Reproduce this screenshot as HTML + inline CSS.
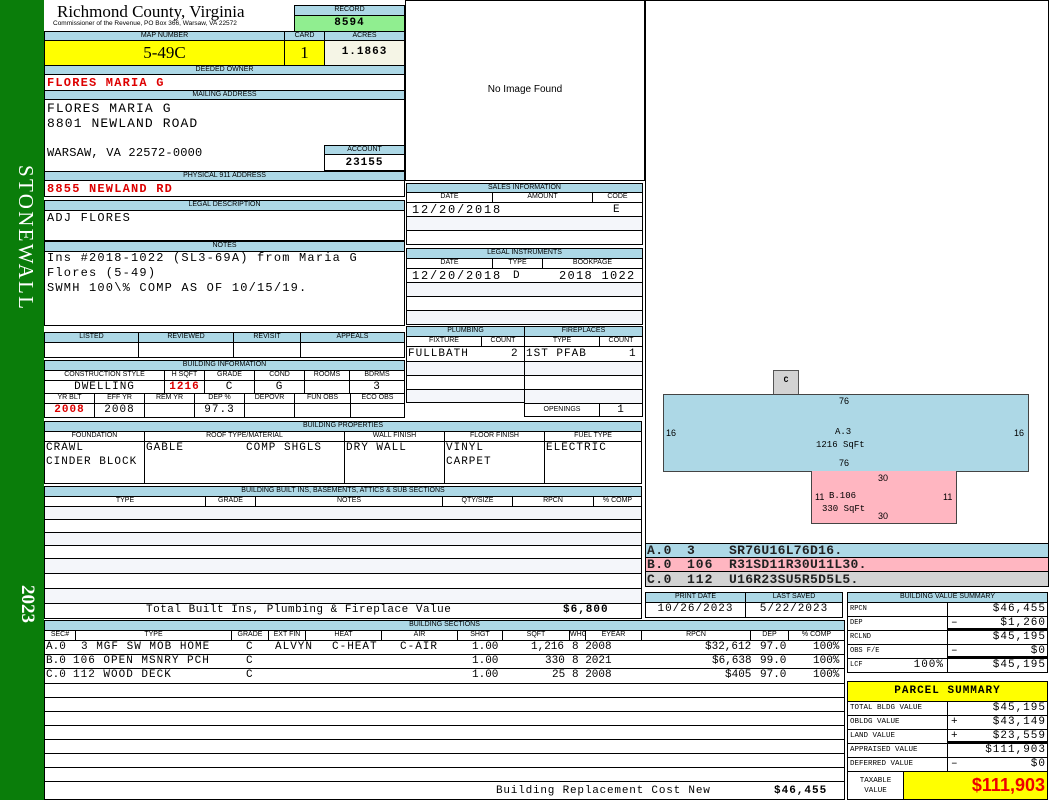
<!DOCTYPE html>
<html><head><meta charset="utf-8"><style>
*{margin:0;padding:0;box-sizing:border-box}
body{width:1050px;height:800px;position:relative;background:#fff;overflow:hidden;font-family:"Liberation Sans",sans-serif}
div{position:absolute}
.h{background:#add8e6;border:1px solid #000;font-size:7px;text-align:center;line-height:8px;color:#000;white-space:nowrap;overflow:hidden}
.l{background:#fff;border:1px solid #000;font-size:7px;text-align:center;line-height:8px;white-space:nowrap;overflow:hidden}
.c{border:1px solid #000;background:#fff}
.g{border:1px solid #000;background:#f4f6fa}
.m{font-family:"Liberation Mono",monospace;font-size:11px;white-space:nowrap;line-height:13px;letter-spacing:1px}
.b{font-size:12px;letter-spacing:1.2px}
.n{letter-spacing:0}
.r{color:#d00;font-weight:bold}
.rt{text-align:right}
.ct{text-align:center}
</style></head><body>
<!-- sidebar -->
<div style="left:0;top:0;width:44px;height:800px;background:#0a7d0a"></div>
<div style="left:6px;top:165px;width:32px;height:160px;color:#fff;font-family:'Liberation Serif',serif;font-size:21px;writing-mode:vertical-rl;letter-spacing:2.3px">STONEWALL</div>
<div style="left:6px;top:585px;width:32px;height:50px;color:#fff;font-family:'Liberation Serif',serif;font-size:19px;font-weight:bold;writing-mode:vertical-rl">2023</div>

<!-- title -->
<div style="left:57px;top:2px;font-family:'Liberation Serif',serif;font-size:17px;line-height:20px">Richmond County, Virginia</div>
<div style="left:53px;top:20px;font-size:6.5px;line-height:7px;white-space:nowrap">Commissioner of the Revenue, PO Box 366, Warsaw, VA 22572</div>
<div class="h" style="left:294px;top:5px;width:111px;height:11px">RECORD</div>
<div class="c m" style="left:294px;top:15px;width:111px;height:17px;background:#90ee90;text-align:center;font-weight:bold;line-height:14px">8594</div>

<div class="h" style="left:44px;top:31px;width:241px;height:10px">MAP NUMBER</div>
<div class="h" style="left:284px;top:31px;width:41px;height:10px">CARD</div>
<div class="h" style="left:324px;top:31px;width:81px;height:10px">ACRES</div>
<div class="c" style="left:44px;top:40px;width:241px;height:26px;background:#ffff00;font-family:'Liberation Serif',serif;font-size:17px;text-align:center;line-height:23px">5-49C</div>
<div class="c" style="left:284px;top:40px;width:41px;height:26px;background:#ffff00;font-family:'Liberation Serif',serif;font-size:17px;text-align:center;line-height:23px">1</div>
<div class="c m" style="left:324px;top:40px;width:81px;height:26px;background:#f5f5e6;text-align:center;font-weight:bold;line-height:23px">1.1863</div>

<div class="h" style="left:44px;top:65px;width:361px;height:10px">DEEDED OWNER</div>
<div class="c m r b" style="left:44px;top:74px;width:361px;height:17px;padding-left:2px;line-height:16px">FLORES MARIA G</div>
<div class="h" style="left:44px;top:90px;width:361px;height:10px">MAILING ADDRESS</div>
<div class="c" style="left:44px;top:99px;width:361px;height:73px"></div>
<div class="m" style="left:47px;top:102px;font-size:13px;letter-spacing:1.1px">FLORES MARIA G</div>
<div class="m" style="left:47px;top:117px;font-size:13px;letter-spacing:1.1px">8801 NEWLAND ROAD</div>
<div class="m" style="left:47px;top:147px;font-size:12px;letter-spacing:0.2px">WARSAW, VA 22572-0000</div>
<div class="h" style="left:324px;top:145px;width:81px;height:10px">ACCOUNT</div>
<div class="c m" style="left:324px;top:154px;width:81px;height:17px;text-align:center;font-weight:bold;line-height:16px">23155</div>
<div class="h" style="left:44px;top:171px;width:361px;height:10px">PHYSICAL 911 ADDRESS</div>
<div class="c m r b" style="left:44px;top:180px;width:361px;height:17px;padding-left:2px;line-height:16px">8855 NEWLAND RD</div>

<div class="h" style="left:44px;top:200px;width:361px;height:11px">LEGAL DESCRIPTION</div>
<div class="c" style="left:44px;top:210px;width:361px;height:31px"></div>
<div class="m b" style="left:47px;top:212px">ADJ FLORES</div>
<div class="h" style="left:44px;top:241px;width:361px;height:11px">NOTES</div>
<div class="c" style="left:44px;top:251px;width:361px;height:75px"></div>
<div class="m b" style="left:47px;top:252px">Ins #2018-1022 (SL3-69A) from Maria G</div>
<div class="m b" style="left:47px;top:267px">Flores (5-49)</div>
<div class="m b" style="left:47px;top:282px">SWMH 100\% COMP AS OF 10/15/19.</div>

<!-- listed -->
<div class="h" style="left:44px;top:332px;width:95px;height:11px">LISTED</div>
<div class="h" style="left:138px;top:332px;width:96px;height:11px">REVIEWED</div>
<div class="h" style="left:233px;top:332px;width:68px;height:11px">REVISIT</div>
<div class="h" style="left:300px;top:332px;width:105px;height:11px">APPEALS</div>
<div class="c" style="left:44px;top:342px;width:95px;height:16px"></div>
<div class="c" style="left:138px;top:342px;width:96px;height:16px"></div>
<div class="c" style="left:233px;top:342px;width:68px;height:16px"></div>
<div class="c" style="left:300px;top:342px;width:105px;height:16px"></div>

<!-- building info -->
<div class="h" style="left:44px;top:360px;width:361px;height:11px">BUILDING INFORMATION</div>
<div class="l" style="left:44px;top:370px;width:121px;height:11px">CONSTRUCTION STYLE</div>
<div class="l" style="left:164px;top:370px;width:41px;height:11px">H SQFT</div>
<div class="l" style="left:204px;top:370px;width:51px;height:11px">GRADE</div>
<div class="l" style="left:254px;top:370px;width:51px;height:11px">COND</div>
<div class="l" style="left:304px;top:370px;width:46px;height:11px">ROOMS</div>
<div class="l" style="left:349px;top:370px;width:56px;height:11px">BDRMS</div>
<div class="c m ct" style="left:44px;top:380px;width:121px;height:14px">DWELLING</div>
<div class="c m ct r" style="left:164px;top:380px;width:41px;height:14px">1216</div>
<div class="c m ct" style="left:204px;top:380px;width:51px;height:14px">C</div>
<div class="c m ct" style="left:254px;top:380px;width:51px;height:14px">G</div>
<div class="c m ct" style="left:304px;top:380px;width:46px;height:14px"></div>
<div class="c m ct" style="left:349px;top:380px;width:56px;height:14px">3</div>
<div class="l" style="left:44px;top:393px;width:51px;height:11px">YR BLT</div>
<div class="l" style="left:94px;top:393px;width:51px;height:11px">EFF YR</div>
<div class="l" style="left:144px;top:393px;width:51px;height:11px">REM YR</div>
<div class="l" style="left:194px;top:393px;width:51px;height:11px">DEP %</div>
<div class="l" style="left:244px;top:393px;width:51px;height:11px">DEPOVR</div>
<div class="l" style="left:294px;top:393px;width:57px;height:11px">FUN OBS</div>
<div class="l" style="left:350px;top:393px;width:55px;height:11px">ECO OBS</div>
<div class="c m ct r" style="left:44px;top:403px;width:51px;height:15px">2008</div>
<div class="c m ct" style="left:94px;top:403px;width:51px;height:15px">2008</div>
<div class="c m ct" style="left:144px;top:403px;width:51px;height:15px"></div>
<div class="c m ct" style="left:194px;top:403px;width:51px;height:15px">97.3</div>
<div class="c" style="left:244px;top:403px;width:51px;height:15px"></div>
<div class="c" style="left:294px;top:403px;width:57px;height:15px"></div>
<div class="c" style="left:350px;top:403px;width:55px;height:15px"></div>

<!-- building props -->
<div class="h" style="left:44px;top:421px;width:598px;height:11px">BUILDING PROPERTIES</div>
<div class="l" style="left:44px;top:431px;width:101px;height:11px">FOUNDATION</div>
<div class="l" style="left:144px;top:431px;width:201px;height:11px">ROOF TYPE/MATERIAL</div>
<div class="l" style="left:344px;top:431px;width:101px;height:11px">WALL FINISH</div>
<div class="l" style="left:444px;top:431px;width:101px;height:11px">FLOOR FINISH</div>
<div class="l" style="left:544px;top:431px;width:98px;height:11px">FUEL TYPE</div>
<div class="c" style="left:44px;top:441px;width:101px;height:43px"></div>
<div class="c" style="left:144px;top:441px;width:201px;height:43px"></div>
<div class="c" style="left:344px;top:441px;width:101px;height:43px"></div>
<div class="c" style="left:444px;top:441px;width:101px;height:43px"></div>
<div class="c" style="left:544px;top:441px;width:98px;height:43px"></div>
<div class="m" style="left:46px;top:442px">CRAWL</div>
<div class="m" style="left:46px;top:456px">CINDER BLOCK</div>
<div class="m" style="left:146px;top:442px">GABLE</div>
<div class="m" style="left:246px;top:442px">COMP SHGLS</div>
<div class="m" style="left:346px;top:442px">DRY WALL</div>
<div class="m" style="left:446px;top:442px">VINYL</div>
<div class="m" style="left:446px;top:456px">CARPET</div>
<div class="m" style="left:546px;top:442px">ELECTRIC</div>

<!-- built ins -->
<div class="h" style="left:44px;top:486px;width:598px;height:11px">BUILDING BUILT INS, BASEMENTS, ATTICS &amp; SUB SECTIONS</div>
<div class="l" style="left:44px;top:496px;width:162px;height:11px">TYPE</div>
<div class="l" style="left:205px;top:496px;width:51px;height:11px">GRADE</div>
<div class="l" style="left:255px;top:496px;width:188px;height:11px">NOTES</div>
<div class="l" style="left:442px;top:496px;width:71px;height:11px">QTY/SIZE</div>
<div class="l" style="left:512px;top:496px;width:82px;height:11px">RPCN</div>
<div class="l" style="left:593px;top:496px;width:49px;height:11px">% COMP</div>
<div class="g" style="left:44px;top:506px;width:598px;height:14px"></div>
<div class="c" style="left:44px;top:519px;width:598px;height:14px"></div>
<div class="g" style="left:44px;top:532px;width:598px;height:14px"></div>
<div class="c" style="left:44px;top:545px;width:598px;height:14px"></div>
<div class="g" style="left:44px;top:558px;width:598px;height:16px"></div>
<div class="c" style="left:44px;top:573px;width:598px;height:16px"></div>
<div class="g" style="left:44px;top:588px;width:598px;height:16px"></div>
<div class="c" style="left:44px;top:603px;width:598px;height:16px"></div>
<div class="m" style="left:146px;top:604px;letter-spacing:0.5px">Total Built Ins, Plumbing &amp; Fireplace Value</div>
<div class="m" style="left:563px;top:604px;font-weight:bold">$6,800</div>

<!-- building sections -->
<div class="h" style="left:44px;top:620px;width:801px;height:11px">BUILDING SECTIONS</div>
<div class="l" style="left:44px;top:630px;width:32px;height:11px">SEC#</div>
<div class="l" style="left:75px;top:630px;width:157px;height:11px">TYPE</div>
<div class="l" style="left:231px;top:630px;width:38px;height:11px">GRADE</div>
<div class="l" style="left:268px;top:630px;width:38px;height:11px">EXT FIN</div>
<div class="l" style="left:305px;top:630px;width:77px;height:11px">HEAT</div>
<div class="l" style="left:381px;top:630px;width:77px;height:11px">AIR</div>
<div class="l" style="left:457px;top:630px;width:46px;height:11px">SHGT</div>
<div class="l" style="left:502px;top:630px;width:68px;height:11px">SQFT</div>
<div class="l" style="left:569px;top:630px;width:17px;height:11px">WHGT</div>
<div class="l" style="left:585px;top:630px;width:57px;height:11px">EYEAR</div>
<div class="l" style="left:641px;top:630px;width:110px;height:11px">RPCN</div>
<div class="l" style="left:750px;top:630px;width:39px;height:11px">DEP</div>
<div class="l" style="left:788px;top:630px;width:57px;height:11px">% COMP</div>
<div class="c" style="left:44px;top:640px;width:801px;height:15px"></div>
<div class="c" style="left:44px;top:654px;width:801px;height:15px"></div>
<div class="c" style="left:44px;top:668px;width:801px;height:16px"></div>
<div class="c" style="left:44px;top:683px;width:801px;height:15px"></div>
<div class="c" style="left:44px;top:697px;width:801px;height:15px"></div>
<div class="c" style="left:44px;top:711px;width:801px;height:15px"></div>
<div class="c" style="left:44px;top:725px;width:801px;height:15px"></div>
<div class="c" style="left:44px;top:739px;width:801px;height:15px"></div>
<div class="c" style="left:44px;top:753px;width:801px;height:15px"></div>
<div class="c" style="left:44px;top:767px;width:801px;height:15px"></div>
<div class="c" style="left:44px;top:781px;width:801px;height:19px"></div>
<div class="m n" style="left:46px;top:641px">A.0</div><div class="m" style="left:81px;top:641px">3 MGF SW MOB HOME</div><div class="m n" style="left:246px;top:641px">C</div><div class="m" style="left:275px;top:641px">ALVYN</div><div class="m" style="left:332px;top:641px">C-HEAT</div><div class="m" style="left:400px;top:641px">C-AIR</div><div class="m n" style="left:472px;top:641px">1.00</div><div class="m n" style="left:531px;top:641px">1,216</div><div class="m n" style="left:572px;top:641px">8 2008</div><div class="m n" style="left:705px;top:641px">$32,612</div><div class="m n" style="left:760px;top:641px">97.0</div><div class="m n" style="left:813px;top:641px">100%</div>
<div class="m n" style="left:46px;top:655px">B.0</div><div class="m" style="left:73px;top:655px">106 OPEN MSNRY PCH</div><div class="m n" style="left:246px;top:655px">C</div><div class="m n" style="left:472px;top:655px">1.00</div><div class="m n" style="left:545px;top:655px">330</div><div class="m n" style="left:572px;top:655px">8 2021</div><div class="m n" style="left:712px;top:655px">$6,638</div><div class="m n" style="left:760px;top:655px">99.0</div><div class="m n" style="left:813px;top:655px">100%</div>
<div class="m n" style="left:46px;top:669px">C.0</div><div class="m" style="left:73px;top:669px">112 WOOD DECK</div><div class="m n" style="left:246px;top:669px">C</div><div class="m n" style="left:472px;top:669px">1.00</div><div class="m n" style="left:552px;top:669px">25</div><div class="m n" style="left:572px;top:669px">8 2008</div><div class="m n" style="left:725px;top:669px">$405</div><div class="m n" style="left:760px;top:669px">97.0</div><div class="m n" style="left:813px;top:669px">100%</div>
<div class="m" style="left:496px;top:785px;letter-spacing:0.8px">Building Replacement Cost New</div>
<div class="m" style="left:774px;top:785px;font-weight:bold">$46,455</div>

<!-- image -->
<div class="c" style="left:405px;top:0;width:240px;height:181px"></div>
<div style="left:405px;top:84px;width:240px;text-align:center;font-size:10px">No Image Found</div>

<!-- sales -->
<div class="h" style="left:406px;top:183px;width:237px;height:10px">SALES INFORMATION</div>
<div class="l" style="left:406px;top:192px;width:87px;height:11px">DATE</div>
<div class="l" style="left:492px;top:192px;width:101px;height:11px">AMOUNT</div>
<div class="l" style="left:592px;top:192px;width:51px;height:11px">CODE</div>
<div class="c" style="left:406px;top:202px;width:237px;height:15px"></div>
<div class="g" style="left:406px;top:216px;width:237px;height:15px"></div>
<div class="c" style="left:406px;top:230px;width:237px;height:15px"></div>
<div class="m b" style="left:412px;top:204px;letter-spacing:1.8px">12/20/2018</div><div class="m" style="left:613px;top:204px">E</div>
<div class="h" style="left:406px;top:248px;width:237px;height:11px">LEGAL INSTRUMENTS</div>
<div class="l" style="left:406px;top:258px;width:87px;height:11px">DATE</div>
<div class="l" style="left:492px;top:258px;width:51px;height:11px">TYPE</div>
<div class="l" style="left:542px;top:258px;width:101px;height:11px">BOOKPAGE</div>
<div class="c" style="left:406px;top:268px;width:237px;height:15px"></div>
<div class="g" style="left:406px;top:282px;width:237px;height:15px"></div>
<div class="c" style="left:406px;top:296px;width:237px;height:15px"></div>
<div class="g" style="left:406px;top:310px;width:237px;height:15px"></div>
<div class="m b" style="left:412px;top:270px;letter-spacing:1.8px">12/20/2018</div><div class="m" style="left:513px;top:270px">D</div><div class="m b" style="left:559px;top:270px;letter-spacing:1.3px">2018 1022</div>

<!-- plumbing -->
<div class="h" style="left:406px;top:326px;width:119px;height:11px">PLUMBING</div>
<div class="h" style="left:524px;top:326px;width:119px;height:11px">FIREPLACES</div>
<div class="l" style="left:406px;top:336px;width:76px;height:11px">FIXTURE</div>
<div class="l" style="left:481px;top:336px;width:44px;height:11px">COUNT</div>
<div class="l" style="left:524px;top:336px;width:76px;height:11px">TYPE</div>
<div class="l" style="left:599px;top:336px;width:44px;height:11px">COUNT</div>
<div class="c" style="left:406px;top:346px;width:119px;height:16px"></div>
<div class="g" style="left:406px;top:361px;width:119px;height:15px"></div>
<div class="c" style="left:406px;top:375px;width:119px;height:15px"></div>
<div class="g" style="left:406px;top:389px;width:119px;height:14px"></div>
<div class="c" style="left:524px;top:346px;width:119px;height:16px"></div>
<div class="g" style="left:524px;top:361px;width:119px;height:15px"></div>
<div class="c" style="left:524px;top:375px;width:119px;height:15px"></div>
<div class="g" style="left:524px;top:389px;width:119px;height:15px"></div>
<div class="l" style="left:524px;top:403px;width:76px;height:14px;line-height:12px">OPENINGS</div>
<div class="c m ct" style="left:599px;top:403px;width:44px;height:14px;line-height:12px">1</div>
<div class="m" style="left:408px;top:348px">FULLBATH</div><div class="m" style="left:511px;top:348px">2</div>
<div class="m" style="left:526px;top:348px">1ST PFAB</div><div class="m" style="left:629px;top:348px">1</div>

<!-- sketch -->
<div class="c" style="left:645px;top:0;width:404px;height:544px"></div>
<div style="left:773px;top:370px;width:26px;height:25px;background:#d3d3d3;border:1px solid #555;font:bold 8px 'Liberation Mono',monospace;text-align:center;line-height:20px">C</div>
<div style="left:663px;top:394px;width:366px;height:78px;background:#add8e6;border:1px solid #444"></div>
<div style="left:811px;top:471px;width:146px;height:53px;background:#ffb6c1;border:1px solid #444;border-top:none"></div>
<div style="left:839px;top:396px;font-size:9px">76</div>
<div style="left:839px;top:458px;font-size:9px">76</div>
<div style="left:666px;top:428px;font-size:9px">16</div>
<div style="left:1014px;top:428px;font-size:9px">16</div>
<div style="left:835px;top:427px;font:9px 'Liberation Mono',monospace">A.3</div>
<div style="left:816px;top:440px;font:9px 'Liberation Mono',monospace">1216 SqFt</div>
<div style="left:878px;top:473px;font-size:9px">30</div>
<div style="left:878px;top:511px;font-size:9px">30</div>
<div style="left:815px;top:492px;font-size:9px">11</div>
<div style="left:943px;top:492px;font-size:9px">11</div>
<div style="left:829px;top:491px;font:9px 'Liberation Mono',monospace">B.106</div>
<div style="left:822px;top:504px;font:9px 'Liberation Mono',monospace">330 SqFt</div>

<div style="left:645px;top:543px;width:404px;height:15px;background:#add8e6;border:1px solid #000"></div>
<div style="left:645px;top:557px;width:404px;height:15px;background:#ffb6c1;border:1px solid #000"></div>
<div style="left:645px;top:571px;width:404px;height:16px;background:#d3d3d3;border:1px solid #000"></div>
<div class="m" style="left:647px;top:544px;font-size:13px;font-weight:bold;letter-spacing:0.5px;color:#222">A.0</div><div class="m" style="left:687px;top:544px;font-size:13px;font-weight:bold;color:#222">3</div><div class="m" style="left:729px;top:544px;font-size:13px;font-weight:bold;letter-spacing:0.3px;color:#222">SR76U16L76D16.</div>
<div class="m" style="left:647px;top:558px;font-size:13px;font-weight:bold;letter-spacing:0.5px;color:#222">B.0</div><div class="m" style="left:687px;top:558px;font-size:13px;font-weight:bold;color:#222">106</div><div class="m" style="left:729px;top:558px;font-size:13px;font-weight:bold;letter-spacing:0.3px;color:#222">R31SD11R30U11L30.</div>
<div class="m" style="left:647px;top:573px;font-size:13px;font-weight:bold;letter-spacing:0.5px;color:#222">C.0</div><div class="m" style="left:687px;top:573px;font-size:13px;font-weight:bold;color:#222">112</div><div class="m" style="left:729px;top:573px;font-size:13px;font-weight:bold;letter-spacing:0.3px;color:#222">U16R23SU5R5D5L5.</div>

<div class="h" style="left:645px;top:592px;width:101px;height:11px">PRINT DATE</div>
<div class="h" style="left:745px;top:592px;width:98px;height:11px">LAST SAVED</div>
<div class="c m ct" style="left:645px;top:602px;width:101px;height:16px">10/26/2023</div>
<div class="c m ct" style="left:745px;top:602px;width:98px;height:16px">5/22/2023</div>

<!-- building value summary -->
<div class="h" style="left:847px;top:592px;width:201px;height:11px">BUILDING VALUE SUMMARY</div>
<div class="c" style="left:847px;top:602px;width:101px;height:15px;font:7px 'Liberation Mono',monospace;padding:2px">RPCN</div>
<div class="c m rt" style="left:947px;top:602px;width:101px;height:15px;padding-right:1px">$46,455</div>
<div class="c" style="left:847px;top:616px;width:101px;height:15px;font:7px 'Liberation Mono',monospace;padding:2px">DEP</div>
<div class="c m rt" style="left:947px;top:616px;width:101px;height:15px;padding-right:1px;border-bottom:3px solid #000"><span style="position:absolute;left:3px">–</span>$1,260</div>
<div class="c" style="left:847px;top:630px;width:101px;height:15px;font:7px 'Liberation Mono',monospace;padding:2px">RCLND</div>
<div class="c m rt" style="left:947px;top:630px;width:101px;height:15px;padding-right:1px">$45,195</div>
<div class="c" style="left:847px;top:644px;width:101px;height:15px;font:7px 'Liberation Mono',monospace;padding:2px">OBS F/E</div>
<div class="c m rt" style="left:947px;top:644px;width:101px;height:15px;padding-right:1px;border-bottom:3px solid #000"><span style="position:absolute;left:3px">–</span>$0</div>
<div class="c" style="left:847px;top:658px;width:101px;height:15px;font:7px 'Liberation Mono',monospace;padding:2px">LCF<span class="m" style="position:absolute;right:3px;top:0">100%</span></div>
<div class="c m rt" style="left:947px;top:658px;width:101px;height:15px;padding-right:1px">$45,195</div>

<!-- parcel summary -->
<div style="left:847px;top:681px;width:201px;height:21px;background:#ffff00;border:1px solid #000;font:bold 11px 'Liberation Mono',monospace;text-align:center;line-height:19px;letter-spacing:1px">PARCEL SUMMARY</div>
<div class="c" style="left:847px;top:701px;width:101px;height:15px;font:7.5px 'Liberation Mono',monospace;padding:2px">TOTAL BLDG VALUE</div>
<div class="c m rt" style="left:947px;top:701px;width:101px;height:15px;padding-right:1px">$45,195</div>
<div class="c" style="left:847px;top:715px;width:101px;height:15px;font:7.5px 'Liberation Mono',monospace;padding:2px">OBLDG VALUE</div>
<div class="c m rt" style="left:947px;top:715px;width:101px;height:15px;padding-right:1px"><span style="position:absolute;left:3px">+</span>$43,149</div>
<div class="c" style="left:847px;top:729px;width:101px;height:15px;font:7.5px 'Liberation Mono',monospace;padding:2px">LAND VALUE</div>
<div class="c m rt" style="left:947px;top:729px;width:101px;height:15px;padding-right:1px;border-bottom:3px solid #000"><span style="position:absolute;left:3px">+</span>$23,559</div>
<div class="c" style="left:847px;top:743px;width:101px;height:15px;font:7.5px 'Liberation Mono',monospace;padding:2px">APPRAISED VALUE</div>
<div class="c m rt" style="left:947px;top:743px;width:101px;height:15px;padding-right:1px">$111,903</div>
<div class="c" style="left:847px;top:757px;width:101px;height:15px;font:7.5px 'Liberation Mono',monospace;padding:2px">DEFERRED VALUE</div>
<div class="c m rt" style="left:947px;top:757px;width:101px;height:15px;padding-right:1px"><span style="position:absolute;left:3px">–</span>$0</div>
<div class="c" style="left:847px;top:771px;width:57px;height:29px;font:7.5px 'Liberation Mono',monospace;text-align:center;line-height:10px;padding-top:4px">TAXABLE<br>VALUE</div>
<div style="left:903px;top:771px;width:145px;height:29px;background:#ffff00;border:1px solid #000;color:#e00;font:bold 18px 'Liberation Sans',sans-serif;text-align:right;line-height:27px;padding-right:2px">$111,903</div>
</body></html>
